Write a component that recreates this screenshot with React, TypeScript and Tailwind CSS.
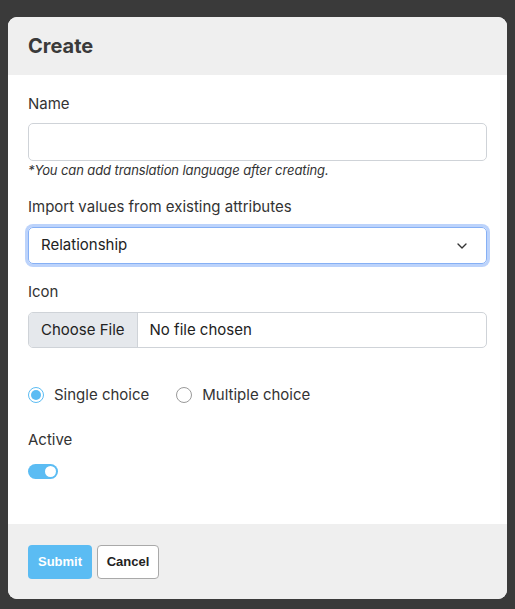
import { ChevronDown } from "lucide-react"

const labelCls = "block text-[15px] leading-5 text-[#333]"

export default function App() {
  return (
    <div className="min-h-screen bg-[#3a3a3a] pl-2 pr-2 pt-[17px] font-['Inter',sans-serif]">
      <div className="w-[499px] overflow-hidden rounded-[9px] bg-white">
        {/* header */}
        <div className="flex h-[58px] items-center bg-[#efefef] px-5">
          <h1 className="text-[20px] font-bold text-[#3a3a3a]">Create</h1>
        </div>

        {/* body */}
        <div className="px-5 pt-[19px] pb-[45px]">
          <label className={labelCls}>Name</label>
          <input
            type="text"
            className="mt-[9px] block h-[38px] w-full rounded-[5px] border border-[#cfd3d8] px-3 text-[15px] outline-none"
          />
          <p className="mt-px text-[13px] leading-4 tracking-[-0.1px] italic text-[#333]">*You can add translation language after creating.</p>

          <label className={`${labelCls} mt-[19px]`}>Import values from existing attributes</label>
          <div className="mt-[10px] flex h-[37px] w-full items-center justify-between rounded-[5px] border border-[#86b0f5] px-3 text-[15px] text-[#222] ring-[3px] ring-[#bcd3fb]">
            <span>Relationship</span>
            <ChevronDown size={16} strokeWidth={2} className="mr-1 text-[#333]" />
          </div>

          <label className={`${labelCls} mt-[18px]`}>Icon</label>
          <div className="mt-[10px] flex h-[36px] w-full overflow-hidden rounded-[5px] border border-[#cfd3d8] text-[15px] text-[#222]">
            <span className="flex items-center border-r border-[#cfd3d8] bg-[#e5e8ec] px-3">Choose File</span>
            <span className="flex items-center pl-3">No file chosen</span>
          </div>

          <div className="mt-[37px] flex h-5 items-center text-[15px] text-[#333]">
            <span className="flex items-center">
              <span className="flex h-4 w-4 items-center justify-center rounded-full border border-[#5bbcf3] bg-white">
                <span className="h-[10px] w-[10px] rounded-full bg-[#5bbcf3]" />
              </span>
              <span className="ml-[10px]">Single choice</span>
            </span>
            <span className="ml-[27px] flex items-center">
              <span className="h-4 w-4 rounded-full border border-[#9a9a9a] bg-white" />
              <span className="ml-[10px]">Multiple choice</span>
            </span>
          </div>

          <label className={`${labelCls} mt-[25px]`}>Active</label>
          <div className="mt-[14px] flex h-[15px] w-[30px] items-center justify-end rounded-full bg-[#5bbcf3] pr-[2px]">
            <span className="h-[11px] w-[11px] rounded-full bg-white" />
          </div>
        </div>

        {/* footer */}
        <div className="flex gap-[5px] bg-[#efefef] px-5 pt-[21px] pb-[20px] font-['Liberation_Sans',Arial,sans-serif]">
          <button className="h-[34px] w-[64px] rounded-[4px] bg-[#5bbcf3] text-[13px] font-bold text-white">Submit</button>
          <button className="h-[34px] w-[62px] rounded-[4px] border border-[#a9a9a9] bg-white text-[13px] font-bold text-[#222]">Cancel</button>
        </div>
      </div>
    </div>
  )
}
